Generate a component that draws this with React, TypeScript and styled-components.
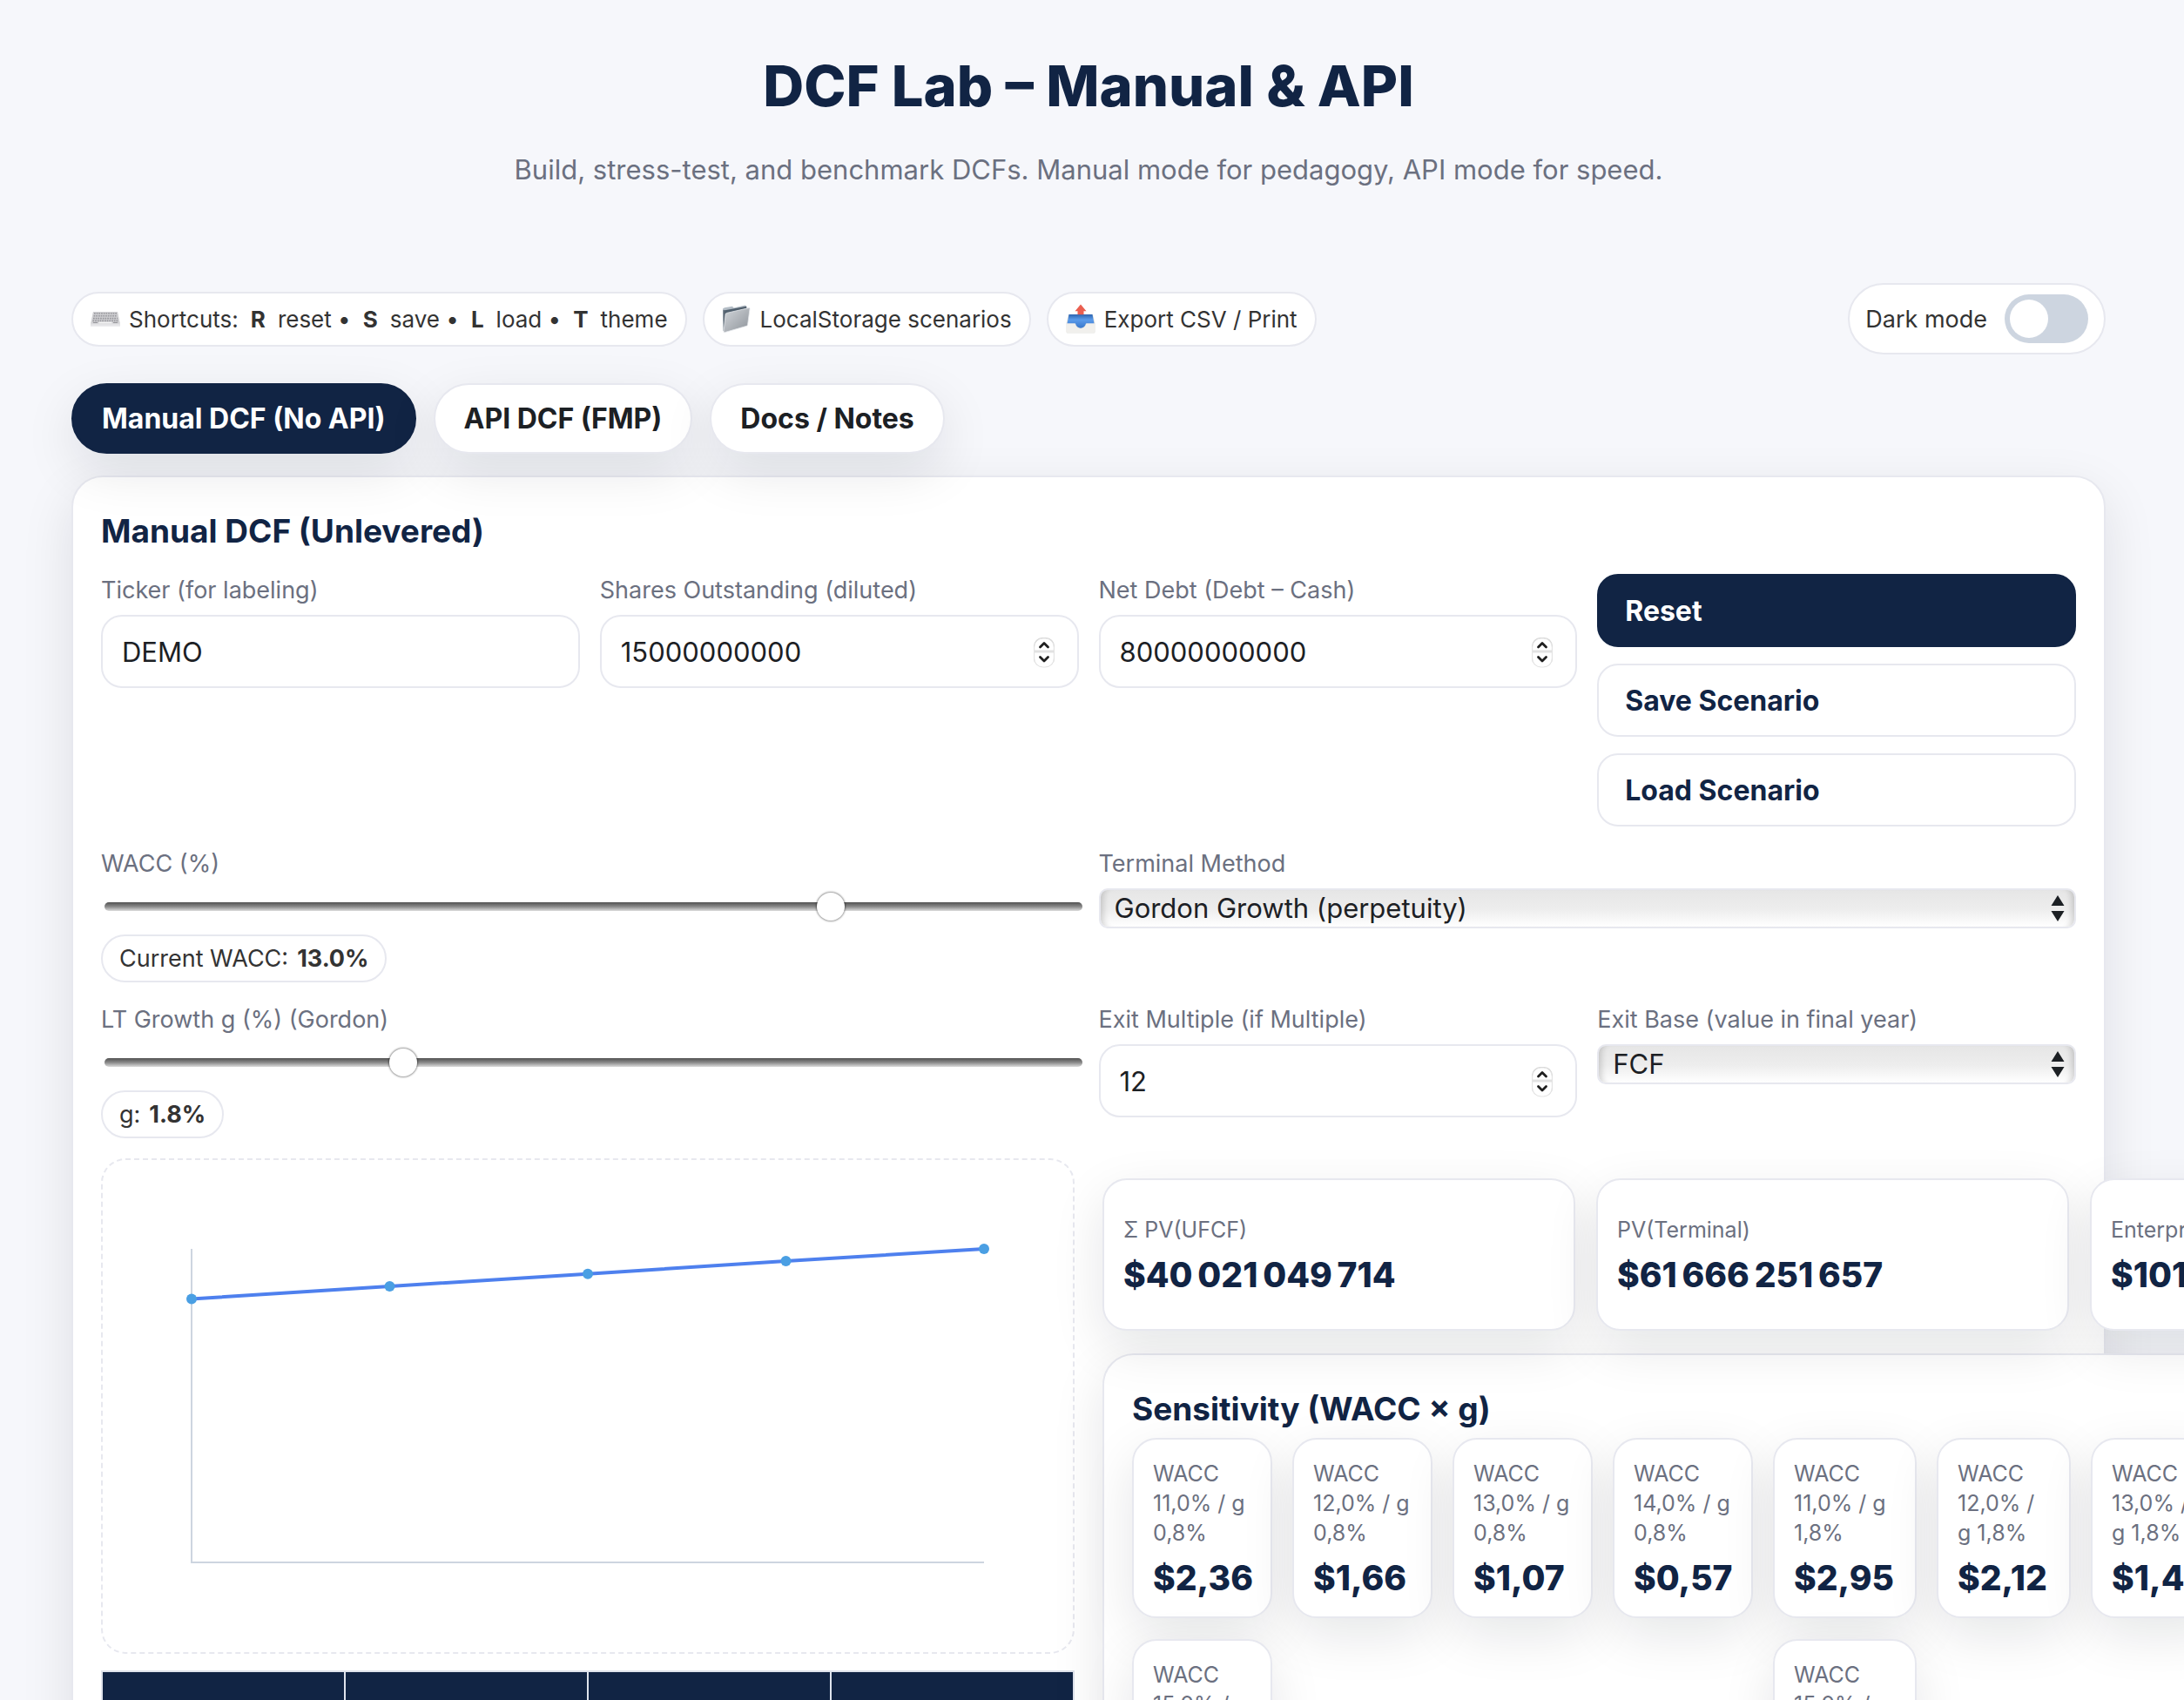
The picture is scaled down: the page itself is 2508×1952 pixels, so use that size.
import React, { useId, useState } from "react";
import styled, { createGlobalStyle, css } from "styled-components";

const color = {
  page: "#f6f7fb",
  navy: "#112444",
  ink: "#1c2024",
  text: "#333333",
  muted: "#6b7080",
  line: "#e7e8ef",
  axis: "#cdd5e0",
  series: "#4e80ee",
  point: "#4a9fe3",
};

const shadow = "0 20px 60px rgba(10, 16, 30, 0.1)";

const GlobalStyle = createGlobalStyle`
  *, *::before, *::after { box-sizing: border-box; }
  body {
    margin: 0;
    background: ${color.page};
    color: ${color.ink};
    font-family: Inter, "Liberation Sans", sans-serif;
    font-size: 31px;
    -webkit-font-smoothing: antialiased;
  }
  button, input, select { font: inherit; color: inherit; }
`;

const Page = styled.div`
  height: 100vh;
  padding-right: 8px;
  overflow: hidden auto;
  scrollbar-width: none;
`;

const Header = styled.header`
  padding: 59px 32px 0;
  text-align: center;
`;

const Title = styled.h1`
  margin: 0;
  color: ${color.navy};
  font-size: 65px;
  font-weight: 800;
  line-height: 80px;
`;

const Subtitle = styled.p`
  margin: 32px 0 0;
  color: ${color.muted};
  font-size: 31px;
  line-height: 48px;
`;

const Container = styled.main`
  max-width: 2400px;
  margin: 0 auto;
  padding: 106px 32px 48px;
`;

const Toolbar = styled.div`
  display: flex;
  align-items: center;
  justify-content: space-between;
`;

const ChipList = styled.div`
  display: flex;
  gap: 18px;
`;

const Chip = styled.span<{ $compact?: boolean }>`
  display: inline-flex;
  align-items: center;
  gap: ${(p) => (p.$compact ? "10px" : "14px")};
  padding: ${(p) => (p.$compact ? "10px 19px" : "14px 20px")};
  border: 2px solid ${color.line};
  border-radius: 999px;
  background: #fff;
  color: ${color.text};
  font-size: ${(p) => (p.$compact ? "27px" : "26px")};
  line-height: 31px;
  white-space: pre;
`;

const ChipLead = styled.span`
  display: inline-flex;
  align-items: center;
  gap: 10px;
`;

const Emoji = styled.svg`
  width: 34px;
  height: 34px;
  flex: none;
  margin: -4px 0;
`;

const ThemeSwitch = styled.label`
  display: inline-flex;
  align-items: center;
  gap: 20px;
  padding: 11px 18px;
  border: 2px solid ${color.line};
  border-radius: 999px;
  background: #fff;
  color: ${color.text};
  font-size: 27px;
`;

const Switch = styled.input`
  appearance: none;
  display: flex;
  width: 96px;
  height: 56px;
  margin: 0;
  padding: 6px;
  border-radius: 999px;
  background: ${color.axis};

  &::before {
    content: "";
    width: 44px;
    height: 44px;
    border-radius: 50%;
    background: #fff;
  }

  &:checked {
    justify-content: flex-end;
    background: ${color.navy};
  }
`;

const Tabs = styled.nav`
  position: relative;
  z-index: 1;
  display: flex;
  gap: 20px;
  margin: 33px 0 25px;
`;

const Tab = styled.button<{ $active?: boolean }>`
  height: 81px;
  padding: 0 33px;
  border: 2px solid ${(p) => (p.$active ? color.navy : color.line)};
  border-radius: 999px;
  background: ${(p) => (p.$active ? color.navy : "#fff")};
  color: ${(p) => (p.$active ? "#fff" : color.ink)};
  font-size: 32px;
  font-weight: 700;
  box-shadow: ${shadow};
`;

const Card = styled.section`
  padding: 32px;
  border: 2px solid ${color.line};
  border-radius: 36px;
  background: #fff;
  box-shadow: ${shadow};
`;

const CardTitle = styled.h2`
  margin: 0;
  color: ${color.navy};
  font-size: 37px;
  font-weight: 700;
  line-height: 60px;
`;

const FieldGrid = styled.div`
  display: grid;
  grid-template-columns: repeat(4, minmax(0, 1fr));
  gap: 24px 23px;
  margin-top: 19px;
`;

const Field = styled.div<{ $span?: number }>`
  display: flex;
  flex-direction: column;
  align-items: flex-start;
  grid-column: span ${(p) => p.$span ?? 1};
`;

const Label = styled.label`
  margin-bottom: 9px;
  color: ${color.muted};
  font-size: 27px;
  line-height: 38px;
`;

const ControlBox = styled.div`
  position: relative;
  width: 100%;
`;

const TextInput = styled.input`
  display: block;
  width: 100%;
  height: 84px;
  padding: 0 22px;
  border: 2px solid ${color.line};
  border-radius: 24px;
  background: #fff;
  appearance: textfield;

  &::-webkit-inner-spin-button {
    appearance: none;
  }
`;

const Spinner = styled.svg`
  position: absolute;
  top: 23px;
  right: 26px;
  width: 28px;
  height: 39px;
  pointer-events: none;
`;

const SelectBox = styled.select`
  appearance: none;
  display: block;
  width: 100%;
  height: 46px;
  padding: 0 56px 0 16px;
  border: 2px solid ${color.line};
  border-radius: 10px;
  background: linear-gradient(#e6e6e6, #ededed 52%, #ffffff);
  box-shadow: inset 9px 0 7px -6px rgba(0, 0, 0, 0.16), inset -9px 0 7px -6px rgba(0, 0, 0, 0.16);
  line-height: 42px;
`;

const SelectArrows = styled.svg`
  position: absolute;
  top: 8px;
  right: 13px;
  width: 16px;
  height: 30px;
  pointer-events: none;
`;

const Range = styled.input`
  appearance: none;
  width: 100%;
  height: 34px;
  margin: 4px 4px 15px;
  background: transparent;

  &::-webkit-slider-runnable-track {
    height: 10px;
    border-radius: 5px;
    background: linear-gradient(#515151, #8a8a8a 50%, #dcdcdc);
  }

  &::-webkit-slider-thumb {
    appearance: none;
    width: 32px;
    height: 32px;
    margin-top: -11px;
    border-radius: 50%;
    background: #fff;
    box-shadow: 0 0 2px 1px rgba(0, 0, 0, 0.4);
  }
`;

const ButtonStack = styled.div`
  display: flex;
  flex-direction: column;
  gap: 19px;
`;

const ActionButton = styled.button<{ $primary?: boolean }>`
  height: 84px;
  padding: 0 30px;
  border: 2px solid ${(p) => (p.$primary ? color.navy : color.line)};
  border-radius: 24px;
  background: ${(p) => (p.$primary ? color.navy : "#fff")};
  color: ${(p) => (p.$primary ? "#fff" : color.navy)};
  font-size: 32px;
  font-weight: 700;
  text-align: left;
`;

const ResultGrid = styled.div`
  display: grid;
  grid-template-columns: repeat(2, minmax(0, 1fr));
  gap: 32px;
  margin-top: 23px;
`;

const ChartFrame = styled.div`
  height: 569px;
  border: 2px dashed ${color.line};
  border-radius: 28px;
`;

const ChartSvg = styled.svg`
  display: block;
  width: 100%;
  height: 100%;
`;

const ProjectionTable = styled.table`
  width: 100%;
  margin-top: 19px;
  border-collapse: collapse;
  table-layout: fixed;

  th {
    height: 88px;
    border: 2px solid #dfe3ec;
    background: ${color.navy};
  }
`;

const WideColumn = styled.div`
  width: max-content;
  margin-top: 23px;
`;

const tileGrid = css`
  position: relative;
  z-index: 1;
  display: grid;
`;

const KpiGrid = styled.div`
  ${tileGrid}
  grid-template-columns: repeat(4, 543px);
  gap: 24px;
`;

const Tile = styled.div`
  display: flex;
  flex-direction: column;
  justify-content: center;
  min-height: 175px;
  padding: 22px;
  border: 2px solid ${color.line};
  border-radius: 28px;
  background: #fff;
  box-shadow: ${shadow};
`;

const TileLabel = styled.div`
  color: ${color.muted};
  font-size: 25px;
  line-height: 34px;
`;

const TileValue = styled.div`
  margin-top: 13px;
  color: ${color.navy};
  font-size: 39px;
  font-weight: 800;
  line-height: 44px;
  white-space: nowrap;
`;

const SensitivityCard = styled(Card)`
  margin-top: 26px;
`;

const ScenarioGroups = styled.div`
  display: flex;
  align-items: flex-start;
  gap: 23px;
  margin-top: 3px;
`;

const ScenarioGrid = styled.div<{ $first: number; $rest: number }>`
  ${tileGrid}
  grid-template-columns: ${(p) => p.$first}px repeat(3, ${(p) => p.$rest}px);
  gap: 24px 23px;
`;

function KeyboardIcon() {
  return (
    <Emoji viewBox="0 0 34 34" aria-hidden="true">
      <path d="M3 9h28l3 14v2.5H0V23z" fill="#e3e3e5" />
      <path d="M3 9h28l2.6 13.5H.4z" fill="#d0d0d3" />
      <g stroke="#96969b" strokeWidth="1.6" strokeDasharray="1.7 1">
        <path d="M4 11h26M3.6 13.8h27M3 16.6h28M2.5 19.4h29" />
      </g>
      <path d="M3 21.5h5M26 21.5h5" stroke="#96969b" strokeWidth="1" />
      <path d="M9.5 21.5h15" stroke="#f3f3f4" strokeWidth="1.6" />
      <path d="M.2 25.3h33.6" stroke="#ececee" strokeWidth="1.4" />
    </Emoji>
  );
}

function FolderIcon() {
  return (
    <Emoji viewBox="0 0 34 34" aria-hidden="true">
      <defs>
        <linearGradient id="folder-front" x1="0" y1="0" x2="1" y2="1">
          <stop offset="0" stopColor="#d3d7db" />
          <stop offset="1" stopColor="#8d9299" />
        </linearGradient>
      </defs>
      <path d="M1 5.5l2-1.3 9-1.4 1.6 1.6 13-2.8 1.6.8L30 6 4 31 1.6 31z" fill="#b4bdc6" />
      <path d="M2 7.5l26-4.8v4.8L4 29H2.4z" fill="#505f6d" />
      <path d="M1.4 7l1.8.5 1 3-1 20.5H1.8z" fill="#5a6773" />
      <path d="M5.5 10.4L31 4.6c.8-.1 1.2.3 1 1.2l-2.4 18c-.1.8-.5 1.2-1.2 1.5L3.4 32.6c-.9.2-1.4-.2-1.3-1.1l2-19.4c.1-1 .5-1.5 1.4-1.7z" fill="url(#folder-front)" stroke="#e6e9ec" strokeWidth=".8" />
    </Emoji>
  );
}

function OutboxIcon() {
  return (
    <Emoji viewBox="0 0 34 34" aria-hidden="true">
      <defs>
        <linearGradient id="outbox-blue" x1="0" y1="0" x2="0" y2="1">
          <stop offset="0" stopColor="#2d65b0" />
          <stop offset=".4" stopColor="#5b9bea" />
          <stop offset="1" stopColor="#3877cb" />
        </linearGradient>
      </defs>
      <path d="M3 12h28l2.5 10v10c0 .9-.5 1.5-1.5 1.5H2C1 33.5.5 32.9.5 32V22z" fill="#e4e3df" />
      <path d="M3.5 12h27l2 10.5H23c-.8 3.4-3 5.2-6 5.2s-5.2-1.8-6-5.2H1.5z" fill="url(#outbox-blue)" />
      <path d="M1 22.5h9.500c.8 3.9 3.2 5.7 6.5 5.7s5.7-1.8 6.5-5.7H33V32c0 .6-.4 1-1 1H2c-.6 0-1-.4-1-1z" fill="#f1f0ed" />
      <path d="M17 .5l6.5 7.8h-3v4h-7v-4h-3z" fill="#ea5f50" />
    </Emoji>
  );
}

interface FieldProps {
  label: string;
  span?: number;
}

function NumberField({ label, value }: FieldProps & { value: number }) {
  const id = useId();
  return (
    <Field>
      <Label htmlFor={id}>{label}</Label>
      <ControlBox>
        <TextInput id={id} type="number" defaultValue={value} />
        <Spinner viewBox="0 0 28 39" aria-hidden="true">
          <rect x="2" y="3" width="24" height="34" rx="10" fill="#d4d4d4" />
          <rect x="2.7" y="4" width="22.6" height="33" rx="10" fill="#fff" stroke="#e4e4e4" />
          <path d="M3 17.5h22v3H3z" fill="#e2e2e2" />
          <path d="M9.5 14l4.5-4.5 4.5 4.5M9.5 25.5l4.5 4.5 4.5-4.5" fill="none" stroke="#1f1f1f" strokeWidth="2.8" strokeLinecap="round" strokeLinejoin="round" />
        </Spinner>
      </ControlBox>
    </Field>
  );
}

function SelectField({ label, span, options }: FieldProps & { options: string[] }) {
  const id = useId();
  return (
    <Field $span={span}>
      <Label htmlFor={id}>{label}</Label>
      <ControlBox>
        <SelectBox id={id} defaultValue={options[0]}>
          {options.map((option) => (
            <option key={option}>{option}</option>
          ))}
        </SelectBox>
        <SelectArrows viewBox="0 0 16 30" aria-hidden="true">
          <path d="M8 0l7.5 12H.5zM8 30l7.5-12H.5z" fill={color.ink} />
        </SelectArrows>
      </ControlBox>
    </Field>
  );
}

interface RangeFieldProps extends FieldProps {
  readout: string;
  min: number;
  max: number;
  initial: number;
}

function RangeField({ label, readout, min, max, initial }: RangeFieldProps) {
  const id = useId();
  const [value, setValue] = useState(initial);
  return (
    <Field $span={2}>
      <Label htmlFor={id}>{label}</Label>
      <Range
        id={id}
        type="range"
        min={min}
        max={max}
        step={0.1}
        value={value}
        onChange={(e) => setValue(Number(e.target.value))}
      />
      <Chip $compact>
        {readout}
        <b>{`${value.toFixed(1)}%`}</b>
      </Chip>
    </Field>
  );
}

const points = [
  [102, 159.5],
  [329.5, 145],
  [557, 130.7],
  [784.5, 116],
  [1012, 102],
];

function CashFlowChart() {
  return (
    <ChartFrame>
      <ChartSvg viewBox="0 0 1114 565" role="img" aria-label="Projected cash flow">
        <path d="M102 102v360h910" fill="none" stroke={color.axis} strokeWidth="2" />
        <polyline
          points={points.map((p) => p.join(",")).join(" ")}
          fill="none"
          stroke={color.series}
          strokeWidth="4"
        />
        {points.map(([x, y]) => (
          <circle key={x} cx={x} cy={y} r="6" fill={color.point} />
        ))}
      </ChartSvg>
    </ChartFrame>
  );
}

const kpis = [
  ["Σ PV(UFCF)", "$40\u202f021\u202f049\u202f714"],
  ["PV(Terminal)", "$61\u202f666\u202f251\u202f657"],
  ["Enterprise Value", "$101\u202f687\u202f301\u202f371"],
];

const scenarioGroups = [
  {
    g: "0,8%",
    first: 161,
    rest: 161,
    rows: [["11,0%", "$2,36"], ["12,0%", "$1,66"], ["13,0%", "$1,07"], ["14,0%", "$0,57"], ["15,0%", "$0,14"]],
  },
  {
    g: "1,8%",
    first: 165,
    rest: 154,
    rows: [["11,0%", "$2,95"], ["12,0%", "$2,12"], ["13,0%", "$1,45"], ["14,0%", "$0,88"], ["15,0%", "$0,40"]],
  },
];

export default function App() {
  const [dark, setDark] = useState(false);
  const tickerId = useId();

  return (
    <>
      <GlobalStyle />
      <Page>
        <Header>
          <Title>DCF Lab – Manual &amp; API</Title>
          <Subtitle>
            Build, stress-test, and benchmark DCFs. Manual mode for pedagogy, API mode for speed.
          </Subtitle>
        </Header>
        <Container>
          <Toolbar>
            <ChipList>
              <Chip>
                <ChipLead><KeyboardIcon />Shortcuts:</ChipLead>
                <b>R</b>reset •<b>S</b>save •<b>L</b>load •<b>T</b>theme
              </Chip>
              <Chip>
                <ChipLead><FolderIcon />LocalStorage scenarios</ChipLead>
              </Chip>
              <Chip>
                <ChipLead><OutboxIcon />Export CSV / Print</ChipLead>
              </Chip>
            </ChipList>
            <ThemeSwitch>
              Dark mode
              <Switch type="checkbox" checked={dark} onChange={() => setDark(!dark)} />
            </ThemeSwitch>
          </Toolbar>

          <Tabs>
            <Tab $active>Manual DCF (No API)</Tab>
            <Tab>API DCF (FMP)</Tab>
            <Tab>Docs / Notes</Tab>
          </Tabs>

          <Card>
            <CardTitle>Manual DCF (Unlevered)</CardTitle>
            <FieldGrid>
              <Field>
                <Label htmlFor={tickerId}>Ticker (for labeling)</Label>
                <TextInput id={tickerId} defaultValue="DEMO" />
              </Field>
              <NumberField label="Shares Outstanding (diluted)" value={15000000000} />
              <NumberField label="Net Debt (Debt – Cash)" value={80000000000} />
              <ButtonStack>
                <ActionButton $primary>Reset</ActionButton>
                <ActionButton>Save Scenario</ActionButton>
                <ActionButton>Load Scenario</ActionButton>
              </ButtonStack>

              <RangeField label="WACC (%)" readout="Current WACC:" min={4} max={16} initial={13} />
              <SelectField
                label="Terminal Method"
                span={2}
                options={["Gordon Growth (perpetuity)", "Exit Multiple"]}
              />

              <RangeField label="LT Growth g (%) (Gordon)" readout="g:" min={0} max={6} initial={1.8} />
              <NumberField label="Exit Multiple (if Multiple)" value={12} />
              <SelectField label="Exit Base (value in final year)" options={["FCF", "EBITDA"]} />
            </FieldGrid>

            <ResultGrid>
              <div>
                <CashFlowChart />
                <ProjectionTable>
                  <thead>
                    <tr>
                      <th scope="col" />
                      <th scope="col" />
                      <th scope="col" />
                      <th scope="col" />
                    </tr>
                  </thead>
                </ProjectionTable>
              </div>
              <WideColumn>
                <KpiGrid>
                  {kpis.map(([label, value]) => (
                    <Tile key={label}>
                      <TileLabel>{label}</TileLabel>
                      <TileValue>{value}</TileValue>
                    </Tile>
                  ))}
                </KpiGrid>
                <SensitivityCard>
                  <CardTitle>Sensitivity (WACC × g)</CardTitle>
                  <ScenarioGroups>
                    {scenarioGroups.map((group) => (
                      <ScenarioGrid key={group.g} $first={group.first} $rest={group.rest}>
                        {group.rows.map(([wacc, price]) => (
                          <Tile key={wacc}>
                            <TileLabel>{`WACC ${wacc} / g ${group.g}`}</TileLabel>
                            <TileValue>{price}</TileValue>
                          </Tile>
                        ))}
                      </ScenarioGrid>
                    ))}
                  </ScenarioGroups>
                </SensitivityCard>
              </WideColumn>
            </ResultGrid>
          </Card>
        </Container>
      </Page>
    </>
  );
}
